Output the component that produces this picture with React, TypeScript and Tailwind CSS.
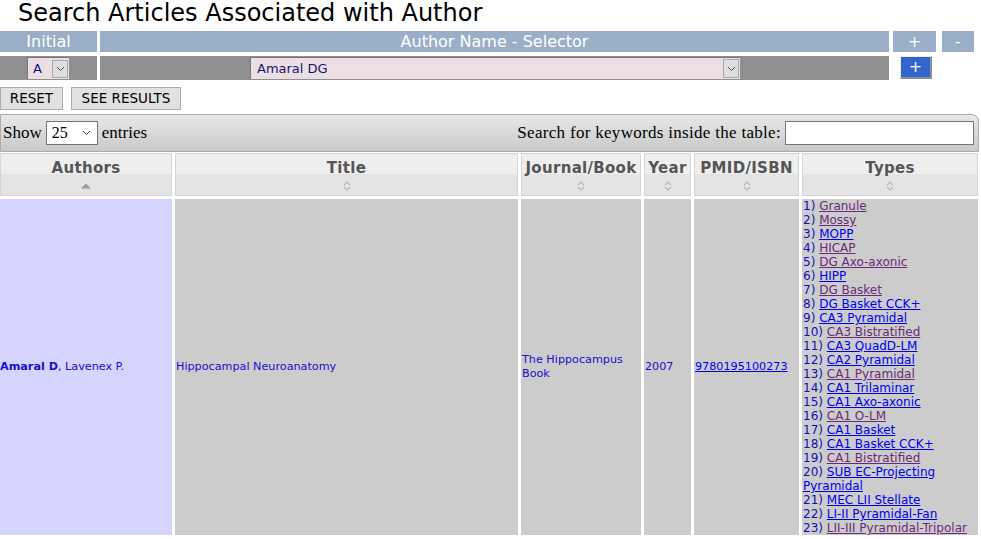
import React from "react";

const verdana = "font-['DejaVu_Sans',Verdana,sans-serif]";

const types: { label: string; visited: boolean }[] = [
  { label: "Granule", visited: true },
  { label: "Mossy", visited: true },
  { label: "MOPP", visited: false },
  { label: "HICAP", visited: true },
  { label: "DG Axo-axonic", visited: true },
  { label: "HIPP", visited: false },
  { label: "DG Basket", visited: true },
  { label: "DG Basket CCK+", visited: false },
  { label: "CA3 Pyramidal", visited: false },
  { label: "CA3 Bistratified", visited: true },
  { label: "CA3 QuadD-LM", visited: false },
  { label: "CA2 Pyramidal", visited: false },
  { label: "CA1 Pyramidal", visited: true },
  { label: "CA1 Trilaminar", visited: false },
  { label: "CA1 Axo-axonic", visited: false },
  { label: "CA1 O-LM", visited: true },
  { label: "CA1 Basket", visited: false },
  { label: "CA1 Basket CCK+", visited: false },
  { label: "CA1 Bistratified", visited: true },
  { label: "SUB EC-Projecting Pyramidal", visited: false },
  { label: "MEC LII Stellate", visited: false },
  { label: "LI-II Pyramidal-Fan", visited: false },
  { label: "LII-III Pyramidal-Tripolar", visited: true },
];

const Chevron = () => (
  <svg width="9" height="6" viewBox="0 0 9 6" className="text-[#444]">
    <path d="M1 1l3.5 3.5L8 1" fill="none" stroke="currentColor" strokeWidth="1" />
  </svg>
);

const SortBoth = () => (
  <svg width="8" height="10" viewBox="0 0 8 10">
    <path d="M1 4l3-3 3 3M1 6l3 3 3-3" fill="none" stroke="#b5b5b5" strokeWidth="1.2" />
  </svg>
);

const SortAsc = () => (
  <svg width="10" height="6" viewBox="0 0 10 6">
    <path d="M0 5.5L5 0.5 10 5.5z" fill="#9a9a9a" />
  </svg>
);

const HeadCell = ({ label, width, asc }: { label: string; width: number; asc?: boolean }) => (
  <th
    style={{ width }}
    className="h-[43px] border border-[#d6d6d6] bg-gradient-to-b from-[#eeeeee] from-50% to-[#e4e4e4] to-50% p-0 align-top"
  >
    <div className="flex flex-col items-center pt-[4px]">
      <span className={`${verdana} text-[15px] leading-[20px] font-bold tracking-[0.3px] text-[#555]`}>{label}</span>
      <span className="mt-[3px] flex h-[10px] items-center">{asc ? <SortAsc /> : <SortBoth />}</span>
    </div>
  </th>
);

export default function App() {
  return (
    <div className={`${verdana} w-[981px] h-[539px] overflow-hidden bg-white`}>
      <h1 className="h-[31px] pl-[18px] text-[24px] leading-[26px] font-normal text-black">
        Search Articles Associated with Author
      </h1>

      {/* selector table */}
      <div className="flex flex-col gap-[4px]">
        <div className="flex h-[21px] text-[16px] leading-[21px] text-white">
          <div className="w-[97px] bg-[#9aafc7] text-center">Initial</div>
          <div className="ml-[3px] w-[789px] bg-[#9aafc7] text-center">Author Name - Selector</div>
          <div className="ml-[4px] w-[43px] bg-[#9aafc7] text-center">+</div>
          <div className="ml-[6px] w-[32px] bg-[#9aafc7] text-center">-</div>
        </div>
        <div className="flex h-[24px]">
          <div className="flex w-[97px] items-center bg-[#8f8f8f] pl-[27px]">
            <div className="flex h-[22px] w-[42px] items-center justify-between border-t border-l border-[#767676] bg-[#ecdfe4] pl-[5px] pr-[1px] text-[13px] text-[#0b0b8a]">
              A
              <span className="flex h-[18px] w-[16px] items-center justify-center border border-[#a8a8a8] bg-[#dedede]">
                <Chevron />
              </span>
            </div>
          </div>
          <div className="ml-[3px] flex w-[789px] items-center bg-[#8f8f8f] pl-[150px]">
            <div className="flex h-[22px] w-[490px] items-center justify-between border-t border-l border-[#767676] bg-[#ebdfe3] pl-[6px] pr-[1px] text-[13px] text-[#14146e]">
              Amaral DG
              <span className="flex h-[19px] w-[16px] items-center justify-center border border-[#a8a8a8] bg-[#dedede]">
                <Chevron />
              </span>
            </div>
          </div>
          <div className="ml-[11px] flex h-[23px] w-[32px] items-center justify-center border-r-2 border-b-2 border-t border-l border-t-[#eee] border-l-[#eee] border-r-[#8f8f8f] border-b-[#8f8f8f] bg-[#3366cc] text-[16px] text-white">
            +
          </div>
        </div>
      </div>

      {/* buttons */}
      <div className="mt-[7px] flex gap-[8px] text-[13.5px] leading-[21px] text-black">
        <button className="h-[23px] w-[63px] border border-[#adadad] bg-[#e1e1e1]">RESET</button>
        <button className="h-[23px] w-[110px] border border-[#adadad] bg-[#e1e1e1]">SEE RESULTS</button>
      </div>

      {/* datatable toolbar */}
      <div className="mt-[4px] flex h-[38px] w-[979px] items-center justify-between rounded-tr-[7px] border border-[#ababab] bg-gradient-to-b from-[#e8e8e8] to-[#c9c9c9] pl-[2px] pr-[4px] font-['Liberation_Serif',serif] text-[17px] text-black">
        <div className="flex items-center gap-[4px]">
          Show
          <div className="flex h-[24px] w-[52px] items-center justify-between border border-[#767676] bg-white pl-[5px] pr-[6px] text-[16px]">
            25
            <Chevron />
          </div>
          entries
        </div>
        <div className="flex items-center gap-[4px]">
          <span className="tracking-[0.3px]">Search for keywords inside the table:</span>
          <div className="h-[24px] w-[189px] border border-[#767676] bg-white" />
        </div>
      </div>

      {/* data table */}
      <table className="-mt-[2px] -ml-[3px] border-separate border-spacing-[3px] text-[11.2px] leading-[14px]">
        <thead>
          <tr>
            <HeadCell label="Authors" width={172} asc />
            <HeadCell label="Title" width={343} />
            <HeadCell label="Journal/Book" width={120} />
            <HeadCell label="Year" width={47} />
            <HeadCell label="PMID/ISBN" width={105} />
            <HeadCell label="Types" width={176} />
          </tr>
        </thead>
        <tbody>
          <tr className="text-[#1a0dcc]">
            <td className="bg-[#d4d4fe] p-0 align-middle">
              <b>Amaral D</b>, Lavenex P.
            </td>
            <td className="bg-[#cccccc] p-0 pl-[1px] align-middle">Hippocampal Neuroanatomy</td>
            <td className="bg-[#cccccc] p-0 pl-[1px] align-middle">
              The Hippocampus
              <br />
              Book
            </td>
            <td className="bg-[#cccccc] p-0 pl-[1px] align-middle">2007</td>
            <td className="bg-[#cccccc] p-0 pl-[1px] align-middle">
              <span className="text-[#0000ee] underline">9780195100273</span>
            </td>
            <td className="bg-[#cccccc] p-0 pl-[1px] align-top text-[12px] text-[#1010b0]">
              {types.map((t, i) => (
                <div key={t.label}>
                  {i + 1}){" "}
                  <span className={`underline ${t.visited ? "text-[#6b2a78]" : "text-[#0000ee]"}`}>{t.label}</span>
                </div>
              ))}
            </td>
          </tr>
        </tbody>
      </table>
    </div>
  );
}
